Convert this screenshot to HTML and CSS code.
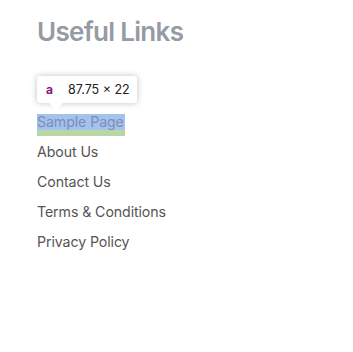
FILE: index.html
```html
<!DOCTYPE html>
<html>
<head>
    <link rel="stylesheet" href="styles.css">
</head>
<body>
    <div class="widget">
        <h2 class="widget-title">Useful Links</h2>
        <ul class="links">
            <li class="inspected">
                <a href="#">Sample Page</a>
                <div class="tip"><span class="tag">a</span><span class="size">87.75 × 22</span></div>
            </li>
            <li><a href="#">About Us</a></li>
            <li><a href="#">Contact Us</a></li>
            <li><a href="#">Terms &amp; Conditions</a></li>
            <li><a href="#">Privacy Policy</a></li>
        </ul>
    </div>
</body>
</html>
```

FILE: styles.css
```css
body {
    margin: 0;
    background: #fff;
    font-family: Inter, "Noto Sans", sans-serif;
}
.widget {
    padding: 16px 37px;
}
.widget-title {
    margin: 0 0 63px;
    font-size: 26px;
    font-weight: 600;
    letter-spacing: -0.7px;
    color: #959ba3;
    line-height: 32px;
}
.links {
    list-style: none;
    margin: 0;
    padding: 0;
}
.links li {
    height: 30px;
}
.links a {
    display: inline-block;
    white-space: nowrap;
    font-size: 14.2px;
    line-height: 16px;
    padding-bottom: 6px;
    color: #555;
    text-decoration: none;
    letter-spacing: -0.1px;
}
.inspected {
    position: relative;
}
.inspected a {
    width: 87.75px;
    color: #7d8fb8;
    background: linear-gradient(#a4c2ec 0 16px, #b8d7a4 16px);
}
.tip {
    position: absolute;
    left: 0;
    top: -35px;
    width: 100px;
    height: 27px;
    box-sizing: border-box;
    padding: 0 0 0 9px;
    background: #fff;
    border-radius: 3px;
    box-shadow: 0 0 6px rgba(0, 0, 0, 0.25);
    display: flex;
    align-items: center;
    gap: 15px;
    font-size: 12.5px;
    color: #222;
}
.tip::after {
    content: "";
    position: absolute;
    left: 12px;
    bottom: -7px;
    border: 7px solid transparent;
    border-bottom: 0;
    border-top-color: #fff;
}
.tag {
    color: #881280;
    font-weight: 700;
    font-size: 12px;
}
```
